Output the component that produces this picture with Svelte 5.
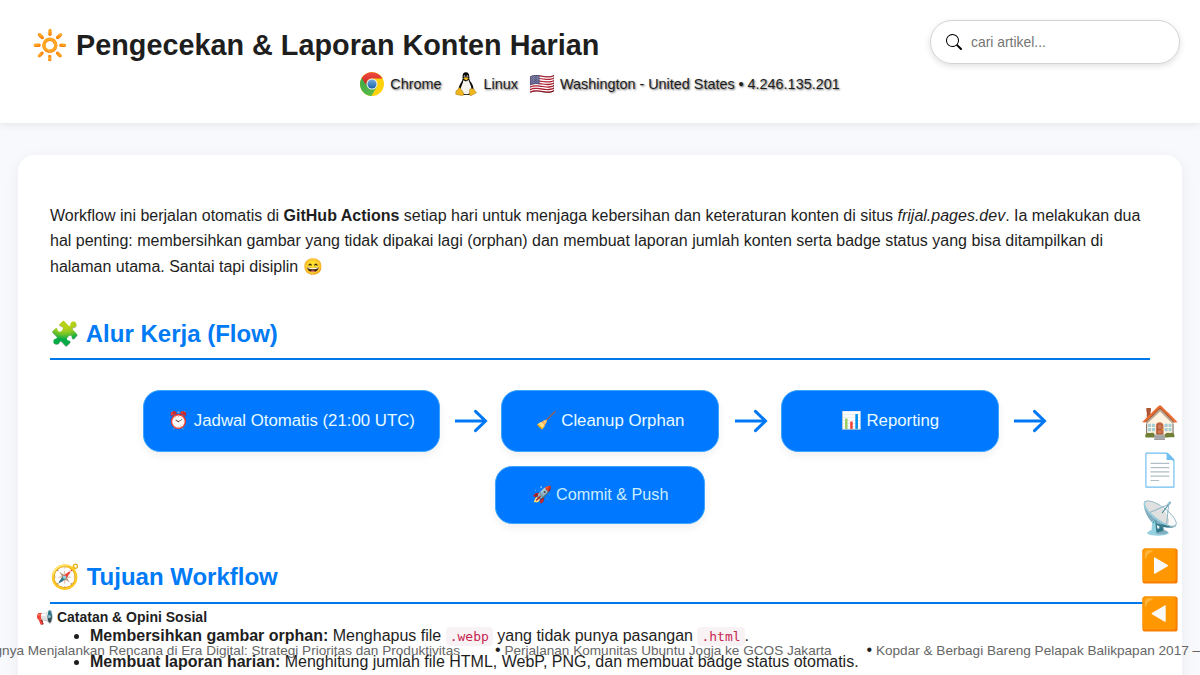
<script>
  const steps = [
    { label: '⏰ Jadwal Otomatis (21:00 UTC)', width: 297 },
    { label: '🧹 Cleanup Orphan', width: 218 },
    { label: '📊 Reporting', width: 218 }
  ];
  const actions = ['🏠', '📄', '📡', '▶️', '◀️'];
</script>

<header>
  <h1>🔆 Pengecekan &amp; Laporan Konten Harian</h1>
  <label class="search">
    <svg width="16" height="16" viewBox="0 0 16 16" fill="#000"><path d="M11.742 10.344a6.5 6.5 0 1 0-1.397 1.398h-.001q.044.06.098.115l3.85 3.85a1 1 0 0 0 1.415-1.414l-3.85-3.85a1 1 0 0 0-.115-.1zM12 6.5a5.5 5.5 0 1 1-11 0 5.5 5.5 0 0 1 11 0" /></svg>
    <input placeholder="cari artikel..." />
  </label>
  <div class="visitor">
    <svg class="chrome" width="24" height="24" viewBox="0 0 24 24">
      <defs>
        <linearGradient id="red" x2="0" y2="1"><stop stop-color="#ef4b43" /><stop offset="1" stop-color="#c9211d" /></linearGradient>
        <linearGradient id="green" x2="1" y2="1"><stop stop-color="#39a846" /><stop offset="1" stop-color="#62bd4a" /></linearGradient>
        <linearGradient id="blue" x2="0" y2="1"><stop stop-color="#75a9dc" /><stop offset="1" stop-color="#1762ac" /></linearGradient>
      </defs>
      <circle cx="12" cy="12" r="12" fill="#fdd20a" />
      <path d="M1.7 5.9A12 12 0 0 0 11.4 24L16.8 14.8 12 12Z" fill="url(#green)" />
      <path d="M1.7 5.9A12 12 0 0 1 22.4 6.5H12A5.5 5.5 0 0 0 6.8 14Z" fill="url(#red)" />
      <circle cx="12" cy="12" r="5.5" fill="#f1f1ed" />
      <circle cx="12" cy="12" r="4.5" fill="url(#blue)" />
    </svg>
    <span>Chrome</span>
    <svg class="tux" width="24" height="24" viewBox="0 0 24 24">
      <path d="M12 .2C9.4.2 8.4 2.2 8.6 5c.2 2.9-.3 3.8-1.8 6-1.4 2-2.4 4.8-2.4 7.6L8 23h8l3.5-4.5c.2-3.2-.8-6-2.5-8.2-1.4-1.8-1.7-2.7-1.7-5.4C15.3 1.8 14.3.2 12 .2Z" fill="#080808" />
      <path d="M9.3 8.2 12 9.5l2.6-1.6c.3 2.4 2.8 5.1 2.9 9.1 0 3.3-2.1 5.3-5 5.3-3.2 0-5.9-1.6-5.9-4.4 0-3.9 2.8-6.7 2.7-9.7Z" fill="#f5f4ef" />
      <ellipse cx="10.5" cy="4.4" rx=".8" ry="1.1" fill="#d8d8d4" />
      <ellipse cx="13.4" cy="4.4" rx=".9" ry="1.1" fill="#d8d8d4" />
      <circle cx="10.8" cy="4.7" r=".5" /><circle cx="13.1" cy="4.7" r=".5" />
      <path d="m9.1 6.5 2.8-1.4 3 1.3-2.7 2Z" fill="#eeb31c" />
      <path d="M4.6 15.9c1-.8 2 .2 2.8 1.7l2.1 3.2c1.2 2-.4 3.4-2.3 2.8-2-.8-4.3-.7-5.3-1.2-.8-.4.1-1.4-.1-2.8-.2-1.5 1.8-1.2 2-2.1Z" fill="#efb51d" stroke="#684b08" stroke-width=".3" />
      <path d="M15.7 17.2c1.1-1 3.6-1.1 4.6.2.3 1.8 2.3 2.3 2.1 3.2-.5 1.3-3.5 1.6-4.4 2.7-1.3 1-3 .2-2.7-1.3Z" fill="#efb51d" stroke="#684b08" stroke-width=".3" />
    </svg>
    <span>Linux</span>
    <span class="flag">🇺🇸</span>
    <span>Washington - United States • 4.246.135.201</span>
  </div>
</header>

<main>
  <p>Workflow ini berjalan otomatis di <strong>GitHub Actions</strong> setiap hari untuk menjaga kebersihan dan keteraturan konten di situs <em>frijal.pages.dev</em>. Ia melakukan dua hal penting: membersihkan gambar yang tidak dipakai lagi (orphan) dan membuat laporan jumlah konten serta badge status yang bisa ditampilkan di halaman utama. Santai tapi disiplin 😄</p>
  <h2>🧩 Alur Kerja (Flow)</h2>
  <div class="flow">
    {#each steps as step}
      <div class="step" style:width="{step.width}px">{step.label}</div>
      <svg class="arrow" width="33" height="24" viewBox="0 0 33 24" fill="none" stroke="#0078f5" stroke-width="3"><path d="M0 12H30.5" /><path d="M20.5 2.4 30.5 12 20.5 21.6" stroke-linecap="round" /></svg>
    {/each}
  </div>
  <div class="step last">🚀 Commit &amp; Push</div>
  <h2 class="goals">🧭 Tujuan Workflow</h2>
  <ul>
    <li><strong>Membersihkan gambar orphan:</strong> Menghapus file <code>.webp</code> yang tidak punya pasangan <code>.html</code>.</li>
    <li><strong>Membuat laporan harian:</strong> Menghitung jumlah file HTML, WebP, PNG, dan membuat badge status otomatis.</li>
  </ul>
</main>

<nav>{#each actions as action}<span>{action}</span>{/each}</nav>

<aside>
  <strong>📢 Catatan &amp; Opini Sosial</strong>
  <div class="ticker">
    <span class="one">Pentingnya Menjalankan Rencana di Era Digital: Strategi Prioritas dan Produktivitas</span>
    <span class="two"><b>•</b> Perjalanan Komunitas Ubuntu Jogja ke GCOS Jakarta</span>
    <span class="three"><b>•</b> Kopdar &amp; Berbagi Bareng Pelapak Balikpapan 2017 — Catatan</span>
  </div>
</aside>

<style>
  :global(body) { background: #f8f9fd; overflow: hidden; height: 675px; }
  :global(#app) { height: 675px; overflow: hidden; position: relative; font: 16px/1.6 "Liberation Sans", sans-serif; color: #1e1e1e; }
  * { box-sizing: border-box; }
  header { height: 123px; background: #fff; box-shadow: 0 2px 8px rgba(0,0,0,.08); padding: 20px 20px 0 32px; display: grid; grid-template-columns: 1fr 250px; grid-template-rows: 50px 28px; }
  h1 { margin: 2px 0 0; font-size: 28.8px; line-height: 46px; white-space: nowrap; }
  .search { height: 44px; display: flex; align-items: center; padding: 0 15px; gap: 9px; border: 1px solid #d3d3d3; border-radius: 22px; box-shadow: 0 2px 6px rgba(0,0,0,.13); }
  input { width: 180px; border: 0; outline: 0; padding: 0; background: transparent; font: 13.9px "Liberation Sans", sans-serif; }
  input::placeholder { color: #757575; }
  .visitor { grid-column: 1 / 3; margin-left: -12px; display: flex; justify-content: center; align-items: center; font-size: 14.4px; line-height: 24px; text-shadow: 1px 1px 2px rgba(0,0,0,.6); white-space: nowrap; }
  .chrome { margin-right: 6px; }
  .tux { margin: 0 6px 0 12px; }
  .flag { width: 26px; margin: 0 5px 0 11px; font-size: 20.8px; text-shadow: none; }
  main { margin: 32px 18px 0; min-height: 700px; padding: 47.6px 32px; background: #fff; border-radius: 16px; box-shadow: 0 4px 16px rgba(0,0,0,.06); }
  p { margin: 0; }
  h2 { margin: 35.4px 0 0; padding-bottom: 4.8px; border-bottom: 2px solid #0078eb; color: #007af5; font-size: 24px; line-height: 38.4px; }
  .flow { display: flex; align-items: center; padding-left: 93px; margin-top: 30px; height: 62px; }
  .step { height: 61px; flex: none; display: flex; align-items: center; justify-content: center; border: 1px solid #3da5ff; border-radius: 17px; background: #0078ff; color: #e9fbff; font-size: 16.8px; box-shadow: 0 4px 8px rgba(0,0,0,.06); white-space: nowrap; }
  .flow .step { height: 62px; }
  .arrow { flex: none; margin: 0 13px 0 15px; }
  .arrow:nth-of-type(2) { margin: 0 13px 0 16px; }
  .last { width: 210px; height: 58px; margin: 14px auto 0; font-size: 16.2px; color: #c9edff; }
  .goals { margin-top: 33.9px; padding-bottom: 5.6px; }
  ul { margin: 18.8px 0 0; padding-left: 40px; line-height: 26px; }
  code { display: inline-block; padding: 2px 4px; border-radius: 4px; background: #f9f2f4; color: #c7254e; font: 13px/15px "DejaVu Sans Mono", monospace; }
  nav { position: absolute; right: 21px; top: 402px; width: 39px; display: grid; grid-auto-rows: 48px; font-size: 32px; line-height: 40px; }
  aside { position: absolute; inset: 605px 0 0; overflow: hidden; pointer-events: none; }
  aside strong { display: block; margin-left: 36px; font-size: 14px; line-height: 24px; }
  .ticker { position: relative; height: 30px; font-size: 13.6px; color: #666; white-space: nowrap; line-height: 22px; margin-top: 11px; }
  .ticker b { color: #1e1e1e; font-weight: 400; font-size: 16px; line-height: 1; }
  .ticker span { position: absolute; }
  .one { right: 740px; }
  .two { left: 495px; }
  .three { left: 866.5px; }
</style>
